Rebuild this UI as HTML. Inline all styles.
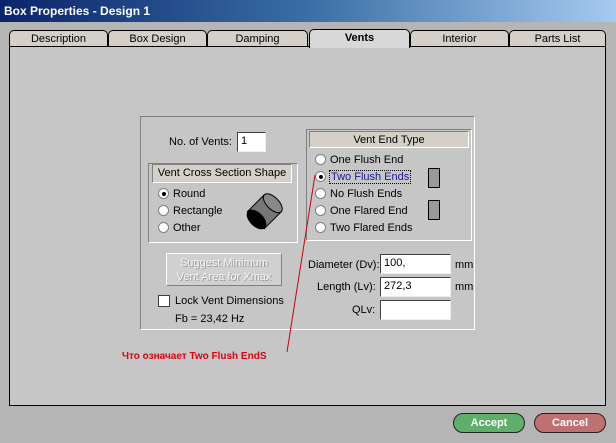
<!DOCTYPE html>
<html><head><style>
body{margin:0;width:616px;height:443px;overflow:hidden;background:#b5b5b5;font-family:"Liberation Sans",sans-serif;font-size:11px;position:relative}
.a{position:absolute}
.title{left:0;top:0;width:616px;height:22px;background:linear-gradient(90deg,#0a246a,#3a6ea5 50%,#a6caf0);color:#fff;font-weight:bold;font-size:12px;line-height:22px;padding-left:4px;box-sizing:border-box}
.tab{top:30px;height:17px;background:#d4d0c8;border:1px solid #000;border-bottom:none;border-radius:5px 5px 0 0;text-align:center;line-height:17px;font-size:11px;box-sizing:border-box}
.panel{left:9px;top:46px;width:597px;height:360px;background:#c6c6c6;border:1px solid #000;box-sizing:border-box}
.sunk{border:1px solid #fff;border-top-color:#808080;border-left-color:#808080;box-sizing:border-box}
.hdr{background:#d4d0c8;border:1px solid #808080;border-right-color:#fff;border-bottom-color:#fff;text-align:center;box-sizing:border-box;line-height:16px}
.inp{background:#fff;border:1px solid #404040;border-right-color:#eee;border-bottom-color:#eee;box-sizing:border-box;padding-left:3px;line-height:17px}
.rad{width:11px;height:11px;border-radius:50%;background:#fff;border:1px solid #808080;box-sizing:border-box}
.dot{width:4px;height:4px;background:#000;border-radius:50%;position:absolute;left:3px;top:3px}
.btn{height:20px;border:1px solid #222;border-radius:10px;color:#fff;font-weight:bold;text-align:center;line-height:18px;box-sizing:border-box;font-size:11px}
</style></head><body>
<div class="a title">Box Properties - Design 1</div>
<div class="a tab" style="left:9px;width:99px">Description</div>
<div class="a tab" style="left:108px;width:99px">Box Design</div>
<div class="a tab" style="left:207px;width:101px">Damping</div>
<div class="a tab" style="left:309px;width:101px;top:29px;height:19px;font-weight:bold;background:#d8d8d8;z-index:2">Vents</div>
<div class="a tab" style="left:410px;width:99px">Interior</div>
<div class="a tab" style="left:509px;width:97px">Parts List</div>
<div class="a panel"></div>
<div class="a sunk" style="left:140px;top:116px;width:335px;height:214px"></div>
<div class="a" style="left:169px;top:136px">No. of Vents:</div>
<div class="a inp" style="left:237px;top:132px;width:29px;height:20px">1</div>
<div class="a sunk" style="left:148px;top:163px;width:150px;height:80px"></div>
<div class="a hdr" style="left:152px;top:164px;width:140px;height:19px">Vent Cross Section Shape</div>
<div class="a rad" style="left:158px;top:188px"><div class="dot"></div></div><div class="a" style="left:173px;top:188px">Round</div>
<div class="a rad" style="left:158px;top:205px"></div><div class="a" style="left:173px;top:205px">Rectangle</div>
<div class="a rad" style="left:158px;top:222px"></div><div class="a" style="left:173px;top:222px">Other</div>
<svg class="a" style="left:244px;top:190px" width="42" height="42">
<g transform="rotate(-45 21 21)">
<rect x="8" y="9" width="24" height="24" fill="#777" stroke="#000"/>
<ellipse cx="32" cy="21" rx="6" ry="12" fill="#888" stroke="#000"/>
<ellipse cx="9" cy="21" rx="7" ry="12" fill="#000"/>
</g></svg>
<div class="a sunk" style="left:306px;top:129px;width:166px;height:112px"></div>
<div class="a hdr" style="left:309px;top:131px;width:160px;height:17px">Vent End Type</div>
<div class="a rad" style="left:315px;top:154px"></div><div class="a" style="left:330px;top:154px">One Flush End</div>
<div class="a rad" style="left:315px;top:171px"><div class="dot"></div></div><div class="a" style="left:329px;top:170px;color:#1a1aa0;border:1px dotted #000;padding:0 1px">Two Flush Ends</div>
<div class="a rad" style="left:315px;top:188px"></div><div class="a" style="left:330px;top:188px">No Flush Ends</div>
<div class="a rad" style="left:315px;top:205px"></div><div class="a" style="left:330px;top:205px">One Flared End</div>
<div class="a rad" style="left:315px;top:222px"></div><div class="a" style="left:330px;top:222px">Two Flared Ends</div>
<div class="a" style="left:428px;top:168px;width:12px;height:20px;background:#999;border:1px solid #000;box-sizing:border-box"></div>
<div class="a" style="left:428px;top:200px;width:12px;height:20px;background:#999;border:1px solid #000;box-sizing:border-box"></div>
<div class="a" style="left:166px;top:253px;width:116px;height:33px;background:#d0d0d0;border:1px solid #fff;border-right-color:#808080;border-bottom-color:#808080;box-sizing:border-box;color:#f4f4f4;text-align:center;line-height:14px;padding-top:2px;text-shadow:1px 1px #999">Suggest Minimum<br>Vent Area for Xmax</div>
<div class="a" style="left:158px;top:295px;width:12px;height:12px;background:#fff;border:1px solid #404040;box-sizing:border-box"></div>
<div class="a" style="left:175px;top:295px">Lock Vent Dimensions</div>
<div class="a" style="left:175px;top:313px">Fb = 23,42 Hz</div>
<div class="a" style="left:308px;top:259px">Diameter (Dv):</div>
<div class="a inp" style="left:380px;top:254px;width:71px;height:20px">100,</div><div class="a" style="left:455px;top:259px">mm</div>
<div class="a" style="left:317px;top:281px">Length (Lv):</div>
<div class="a inp" style="left:380px;top:277px;width:71px;height:20px">272,3</div><div class="a" style="left:455px;top:281px">mm</div>
<div class="a" style="left:352px;top:304px">QLv:</div>
<div class="a inp" style="left:380px;top:300px;width:71px;height:20px"></div>
<svg class="a" style="left:0;top:0" width="616" height="443"><line x1="315" y1="175" x2="287" y2="352" stroke="#d00010" stroke-width="1"/></svg>
<div class="a" style="left:122px;top:351px;color:#e00010;font-weight:bold;font-size:10px">Что означает Two Flush EndS</div>
<div class="a btn" style="left:453px;top:413px;width:72px;background:#5fae6a">Accept</div>
<div class="a btn" style="left:534px;top:413px;width:72px;background:#c07070">Cancel</div>
</body></html>
